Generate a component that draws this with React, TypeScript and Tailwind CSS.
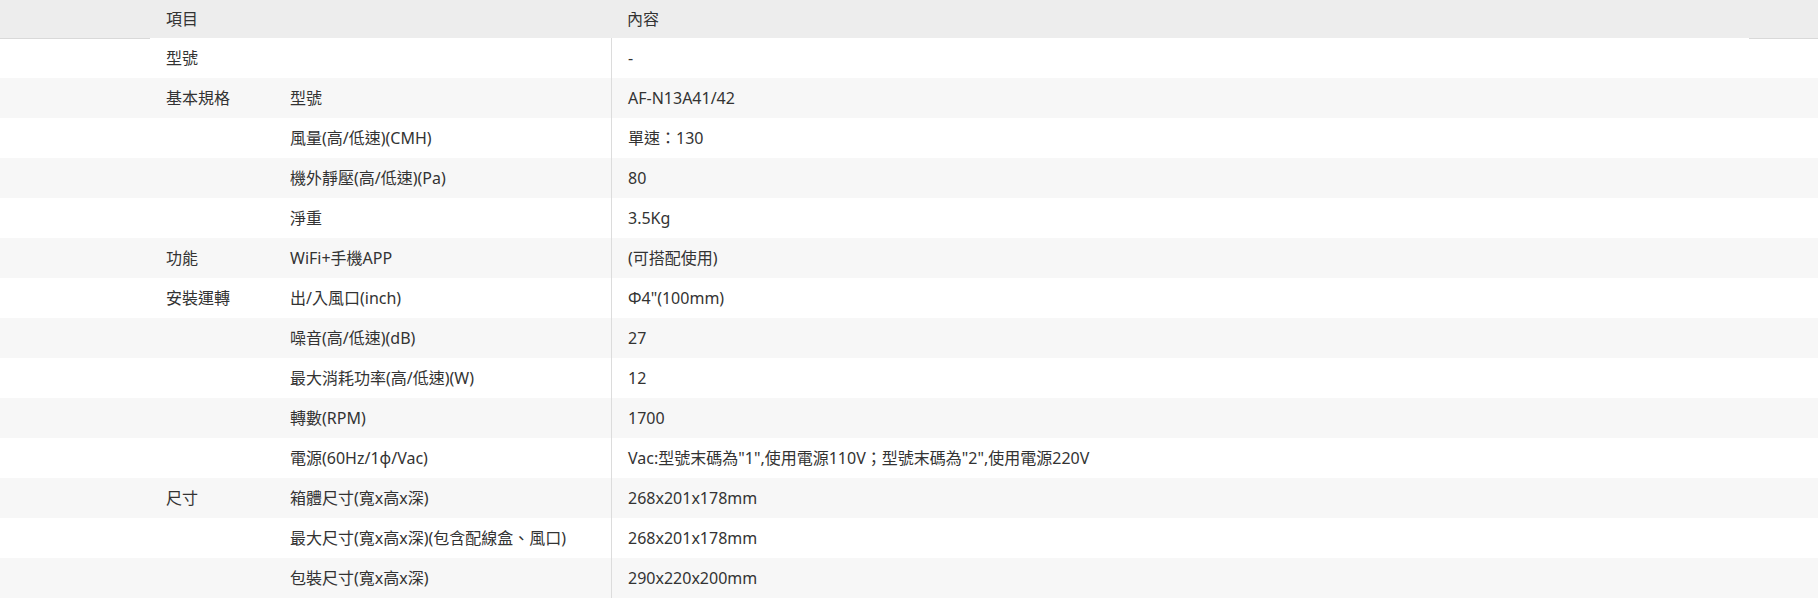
import React from 'react';

const ROWS: [string, string, string][] = [
  ['型號', '', '-'],
  ['基本規格', '型號', 'AF-N13A41/42'],
  ['', '風量(高/低速)(CMH)', '單速：130'],
  ['', '機外靜壓(高/低速)(Pa)', '80'],
  ['', '淨重', '3.5Kg'],
  ['功能', 'WiFi+手機APP', '(可搭配使用)'],
  ['安裝運轉', '出/入風口(inch)', 'Φ4"(100mm)'],
  ['', '噪音(高/低速)(dB)', '27'],
  ['', '最大消耗功率(高/低速)(W)', '12'],
  ['', '轉數(RPM)', '1700'],
  ['', '電源(60Hz/1φ/Vac)', 'Vac:型號末碼為"1",使用電源110V；型號末碼為"2",使用電源220V'],
  ['尺寸', '箱體尺寸(寬x高x深)', '268x201x178mm'],
  ['', '最大尺寸(寬x高x深)(包含配線盒、風口)', '268x201x178mm'],
  ['', '包裝尺寸(寬x高x深)', '290x220x200mm'],
];

const cols = 'grid grid-cols-[150px_124px_337px_1138px_1fr]';

export default function App() {
  return (
    <div
      className="w-[1818px] bg-white text-[16px] text-[#333]"
      style={{ fontFamily: '"Noto Sans", "Noto Sans CJK TC", sans-serif' }}
    >
      {/* header */}
      <div className={`${cols} h-[38px] items-center bg-[#ededed]`}>
        <div />
        <div className="col-span-2 pl-4">項目</div>
        <div className="pl-4">內容</div>
        <div />
      </div>

      {ROWS.map(([group, item, value], i) => (
        <div
          key={i}
          className={`${cols} h-[40px] ${i % 2 === 1 ? 'bg-[#f7f7f7]' : 'bg-white'}`}
        >
          <div className={i === 0 ? 'border-t border-[#d9d9d9]' : ''} />
          <div className="flex items-center pl-4 whitespace-nowrap">{group}</div>
          <div className="flex items-center pl-4 whitespace-nowrap">{item}</div>
          <div className="flex items-center border-l border-[#dcdcdc] pl-4 whitespace-nowrap">
            {value}
          </div>
          <div className={i === 0 ? 'border-t border-[#d9d9d9]' : ''} />
        </div>
      ))}
    </div>
  );
}
